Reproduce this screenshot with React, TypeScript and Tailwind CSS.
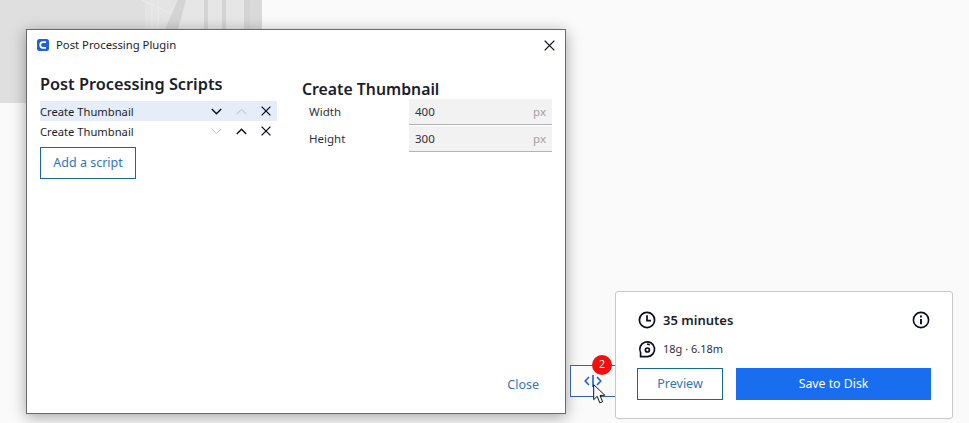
const FONT = '"Noto Sans", "Open Sans", Arial, sans-serif';

function Chevron({ up = false, dim = false }: { up?: boolean; dim?: boolean }) {
  return (
    <svg width="11" height="7" viewBox="0 0 11 7" fill="none" stroke={dim ? "#b6bbc2" : "#0a0a1e"} strokeWidth={dim ? 1 : 1.4}>
      <path d={up ? "M0.8 6 L5.5 1.3 L10.2 6" : "M0.8 1 L5.5 5.7 L10.2 1"} />
    </svg>
  );
}

function Cross({ size = 10, width = 1.3 }: { size?: number; width?: number }) {
  return (
    <svg width={size} height={size} viewBox="0 0 10 10" fill="none" stroke="#0a0a1e" strokeWidth={width}>
      <path d="M0.6 0.6 L9.4 9.4 M9.4 0.6 L0.6 9.4" />
    </svg>
  );
}

function ScriptRow({ active, downDim, upDim }: { active?: boolean; downDim?: boolean; upDim?: boolean }) {
  return (
    <div className={`flex h-5 items-center text-[11.2px] text-[#1d1d28] ${active ? "bg-[#e5edfa]" : ""}`}>
      <span className="flex-1 pt-[2px]">Create Thumbnail</span>
      <div className="flex w-[25px] justify-center"><Chevron dim={downDim} /></div>
      <div className="flex w-[25px] justify-center"><Chevron up dim={upDim} /></div>
      <div className="flex w-[23px] justify-center"><Cross /></div>
    </div>
  );
}

function SettingRow({ label, value }: { label: string; value: string }) {
  return (
    <div className="flex h-[27px] items-center">
      <span className="w-[107px] pb-[2px] pl-[7px] text-[11.5px] text-[#303038]">{label}</span>
      <div className="flex h-[26px] flex-1 items-center justify-between self-start border-b border-[#b4b4b8] bg-[#f2f2f2] pl-[6px] pr-[6px] text-[11.5px]">
        <span className="text-[#303038]">{value}</span>
        <span className="text-[#a0a0a4]">px</span>
      </div>
    </div>
  );
}

export default function App() {
  return (
    <div className="relative h-[423px] w-[969px] overflow-hidden bg-[#fafafa]" style={{ fontFamily: FONT }}>
      {/* 3d viewer remains behind the dialog */}
      <svg width="262" height="103" viewBox="0 0 262 103" className="absolute left-0 top-0">
        <rect width="262" height="103" fill="#dfdfdf" />
        <path d="M145 0 H185 L165 29 H145 Z" fill="#e4e4e4" />
        <path d="M152 0 V29 M158 0 V29 M142 0 L172 14" stroke="#ececec" strokeWidth="1" />
        <path d="M178 0 H250 V29 H165 Z" fill="#d4d4d4" />
        <path d="M186 0 H204 V29 H178 Z M208 0 H222 V29 H208 Z M226 0 H244 V29 H226 Z" fill="#e6e6e6" />
        <rect x="250" width="12" height="29" fill="#dadada" />
      </svg>

      {/* dialog window */}
      <div className="absolute left-[26px] top-[29px] flex h-[385px] w-[540px] flex-col border border-[#6a6a6a] bg-white shadow-[0_3px_14px_rgba(0,0,0,0.35)]">
        <div className="flex h-[30px] items-center pl-[10px] pr-[10px]">
          <svg width="12" height="12" viewBox="0 0 12 12" className="mr-[7px]">
            <rect x="0" y="0" width="12" height="12" rx="2.5" fill="#1f62d6" />
            <path d="M9 3.2 H6 A2.8 2.8 0 0 0 6 8.8 H9" fill="none" stroke="#ffffff" strokeWidth="1.7" />
          </svg>
          <span className="flex-1 text-[11.3px] text-[#1d1d28]">Post Processing Plugin</span>
          <Cross size={11} width={1.1} />
        </div>

        <div className="flex flex-1 pl-[13px] pr-[13px]">
          <div className="w-[237px]">
            <h2 className="mt-[13px] h-[28px] text-[16.3px] font-semibold leading-[22px] text-[#1d1d28]">Post Processing Scripts</h2>
            <ScriptRow active upDim />
            <ScriptRow downDim />
            <button className="mt-[6px] h-[32px] w-[96px] border border-[#196a8f] text-[12.5px] text-[#2f75ba]">Add a script</button>
          </div>
          <div className="ml-[25px] flex-1">
            <h2 className="mt-[18px] h-[21px] text-[15.8px] font-semibold leading-[22px] text-[#1d1d28]">Create Thumbnail</h2>
            <SettingRow label="Width" value="400" />
            <SettingRow label="Height" value="300" />
          </div>
        </div>

        <div className="flex justify-end pb-[18px] pr-[26px]">
          <span className="text-[12.5px] text-[#2f75ba]">Close</span>
        </div>
      </div>

      {/* post processing button behind the panel */}
      <div className="absolute left-[570px] top-[365px] flex h-[32px] w-[50px] items-center border border-[#2f62a8] bg-[#fafafa] pl-[13px]">
        <svg width="18" height="14" viewBox="0 0 18 14" fill="none" stroke="#1f62c8" strokeWidth="1.6">
          <path d="M5 3 L1.2 7 L5 11" />
          <path d="M9 1 V13" />
          <path d="M13 3 L16.8 7 L13 11" />
        </svg>
      </div>

      {/* print summary */}
      <div className="absolute left-[615px] top-[291px] h-[128px] w-[338px] rounded-[3px] border border-[#c8c8c8] bg-white pl-[21px] pr-[22px]">
        <div className="mt-[19px] flex h-[18px] items-center pl-[1px]">
          <svg width="18" height="18" viewBox="0 0 18 18" fill="none" stroke="#0a0a2a" strokeWidth="1.7">
            <circle cx="9" cy="9" r="7.6" />
            <path d="M9 4.2 V9.6 H13" />
          </svg>
          <span className="ml-[7px] flex-1 pt-[2px] text-[13px] font-semibold text-[#1d1d28]">35 minutes</span>
          <svg width="18" height="18" viewBox="0 0 18 18" fill="none" stroke="#0a0a2a" strokeWidth="1.6">
            <circle cx="9" cy="9" r="7.6" />
            <path d="M9 8 V13.2" strokeWidth="1.9" />
            <path d="M9 4.6 V6.4" strokeWidth="1.9" />
          </svg>
        </div>
        <div className="mt-[11px] flex h-[18px] items-center pl-[1px]">
          <svg width="18" height="18" viewBox="0 0 18 18" fill="none" stroke="#0a0a2a" strokeWidth="1.7">
            <path d="M2.6 16.6 H9.4 A7.4 7.4 0 1 0 2.6 12.6 Z" />
            <circle cx="9.4" cy="10" r="2" />
            <path d="M9 4 L11.8 4.8" />
          </svg>
          <span className="ml-[7px] text-[11px] text-[#303038]">18g · 6.18m</span>
        </div>
        <div className="mt-[10px] flex gap-[13px]">
          <button className="h-[32px] w-[86px] shrink-0 border border-[#196a8f] bg-white text-[12.5px] text-[#2f75ba]">Preview</button>
          <button className="h-[32px] w-[195px] shrink-0 bg-[#196ef0] text-[12.3px] text-white">Save to Disk</button>
        </div>
      </div>

      {/* badge */}
      <div className="absolute left-[592px] top-[355px] flex h-[20px] w-[20px] items-center justify-center rounded-full bg-[#f30d0d] text-[10.5px] text-white">2</div>

      {/* mouse cursor */}
      <svg width="15" height="21" viewBox="0 0 15 21" className="absolute left-[593px] top-[384px]">
        <path d="M0.7 0.7 V15.6 L4.2 12.4 L6.8 18.9 L9.6 17.7 L7 11.5 L11.8 11.2 Z" fill="#ffffff" stroke="#101010" strokeWidth="1" />
      </svg>
    </div>
  );
}
